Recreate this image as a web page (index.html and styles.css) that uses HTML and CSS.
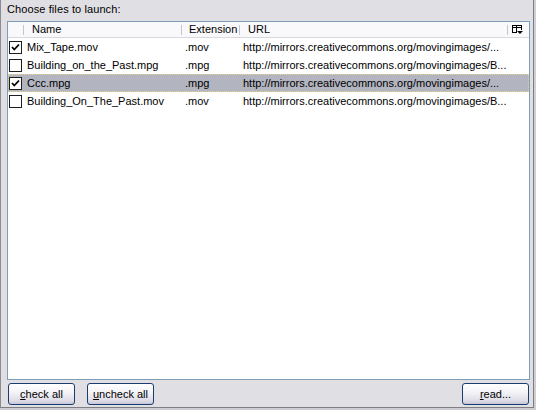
FILE: index.html
```html
<!DOCTYPE html>
<html>
<head>
<meta charset="utf-8">
<link rel="stylesheet" href="styles.css">
</head>
<body>
<div class="frame">
  <div class="label">Choose files to launch:</div>
  <div class="list">
    <div class="header">
      <div class="hcell hcheck"></div>
      <div class="hcell">Name</div>
      <div class="hcell hext">Extension</div>
      <div class="hcell">URL</div>
      <div class="hcell hpick">
        <svg width="11" height="10" viewBox="0 0 11 10" class="picker">
          <rect x="0.5" y="0.5" width="9" height="7" fill="none" stroke="#000"/>
          <line x1="0" y1="2.5" x2="10" y2="2.5" stroke="#000"/>
          <line x1="4.5" y1="0" x2="4.5" y2="8" stroke="#000"/>
          <rect x="5" y="5" width="6" height="5" fill="#fafafa"/>
          <path d="M5 6 L11 6 L8 9 Z" fill="#000"/>
        </svg>
      </div>
    </div>
    <div class="row">
      <div class="cell ccheck"><span class="box"><svg class="tick" width="11" height="11" viewBox="0 0 11 11"><path d="M2 5 L4.3 7.5 L9 2.5" fill="none" stroke="#000" stroke-width="1.8"/></svg></span></div>
      <div class="cell">Mix_Tape.mov</div>
      <div class="cell">.mov</div>
      <div class="cell">http://mirrors.creativecommons.org/movingimages/...</div>
    </div>
    <div class="row">
      <div class="cell ccheck"><span class="box"></span></div>
      <div class="cell">Building_on_the_Past.mpg</div>
      <div class="cell">.mpg</div>
      <div class="cell">http://mirrors.creativecommons.org/movingimages/B...</div>
    </div>
    <div class="row selected">
      <div class="cell ccheck"><span class="box"><svg class="tick" width="11" height="11" viewBox="0 0 11 11"><path d="M2 5 L4.3 7.5 L9 2.5" fill="none" stroke="#000" stroke-width="1.8"/></svg></span></div>
      <div class="cell">Ccc.mpg</div>
      <div class="cell">.mpg</div>
      <div class="cell">http://mirrors.creativecommons.org/movingimages/...</div>
    </div>
    <div class="row">
      <div class="cell ccheck"><span class="box"></span></div>
      <div class="cell">Building_On_The_Past.mov</div>
      <div class="cell">.mov</div>
      <div class="cell">http://mirrors.creativecommons.org/movingimages/B...</div>
    </div>
  </div>
  <div class="buttons">
    <button class="btn"><u>c</u>heck all</button>
    <button class="btn"><u>u</u>ncheck all</button>
    <span class="spacer"></span>
    <button class="btn"><u>r</u>ead...</button>
  </div>
</div>
</body>
</html>
```

FILE: styles.css
```css
html, body {
  margin: 0;
  padding: 0;
}
body {
  width: 536px;
  height: 410px;
  background: #cfced4;
  font-family: "Liberation Sans", Arial, sans-serif;
  font-size: 11px;
  color: #000;
  overflow: hidden;
}
.frame {
  box-sizing: border-box;
  width: 534px;
  height: 408px;
  background: #e0dfe3;
  border-left: 1px solid #8b8b90;
  border-right: 1px solid #7d7d82;
  border-bottom: 1px solid #7d7d82;
  display: flex;
  flex-direction: column;
}
.label {
  height: 21px;
  line-height: 19px;
  padding-left: 6px;
  box-sizing: border-box;
  letter-spacing: 0.1px;
}
.list {
  box-sizing: border-box;
  margin-left: 6px;
  width: 523px;
  height: 359px;
  border: 1px solid #7f9db9;
  background: #fff;
}
.header, .row {
  display: grid;
  grid-template-columns: 16px 158px 58px 268px 21px;
}
.header {
  height: 16px;
  background: #f9f9fb;
  border-bottom: 1px solid #d8d8de;
  box-sizing: border-box;
}
.hcell {
  position: relative;
  line-height: 15px;
  padding-left: 8px;
  white-space: nowrap;
}
.hcell::after {
  content: "";
  position: absolute;
  right: 0;
  top: 3px;
  height: 10px;
  width: 1px;
  background: #c5c5cc;
}
.hext { padding-left: 7px; }
.hcheck { padding-left: 0; }
.hpick { padding-left: 4px; }
.hpick::after { display: none; }
.picker { display: block; margin-top: 3px; }
.row {
  height: 18px;
  line-height: 18px;
  box-sizing: border-box;
}
.cell {
  padding-left: 3px;
  white-space: nowrap;
}
.ccheck {
  padding-left: 1px;
  display: flex;
  align-items: center;
}
.box {
  box-sizing: border-box;
  width: 13px;
  height: 13px;
  border: 1px solid #1e1e1e;
  background: #fff;
  display: block;
  margin-top: 1px;
}
.tick { display: block; }
.selected {
  background: #b2b4bf;
  outline: 1px dotted #e6d48e;
  outline-offset: -1px;
}
.buttons {
  display: flex;
  align-items: flex-start;
  padding: 3px 4px 0 7px;
  gap: 12px;
}
.spacer { flex: 1; }
.btn {
  box-sizing: border-box;
  width: 67px;
  height: 22px;
  border: 1px solid #1b3c6e;
  border-radius: 3px;
  background: linear-gradient(to bottom, #ffffff 0%, #f4f4f8 40%, #dcdbe6 85%, #c6c5d7 100%);
  font-family: "Liberation Sans", Arial, sans-serif;
  font-size: 11px;
  color: #000;
  padding: 0;
  margin: 0;
}
.btn u { text-decoration: underline; }
```
